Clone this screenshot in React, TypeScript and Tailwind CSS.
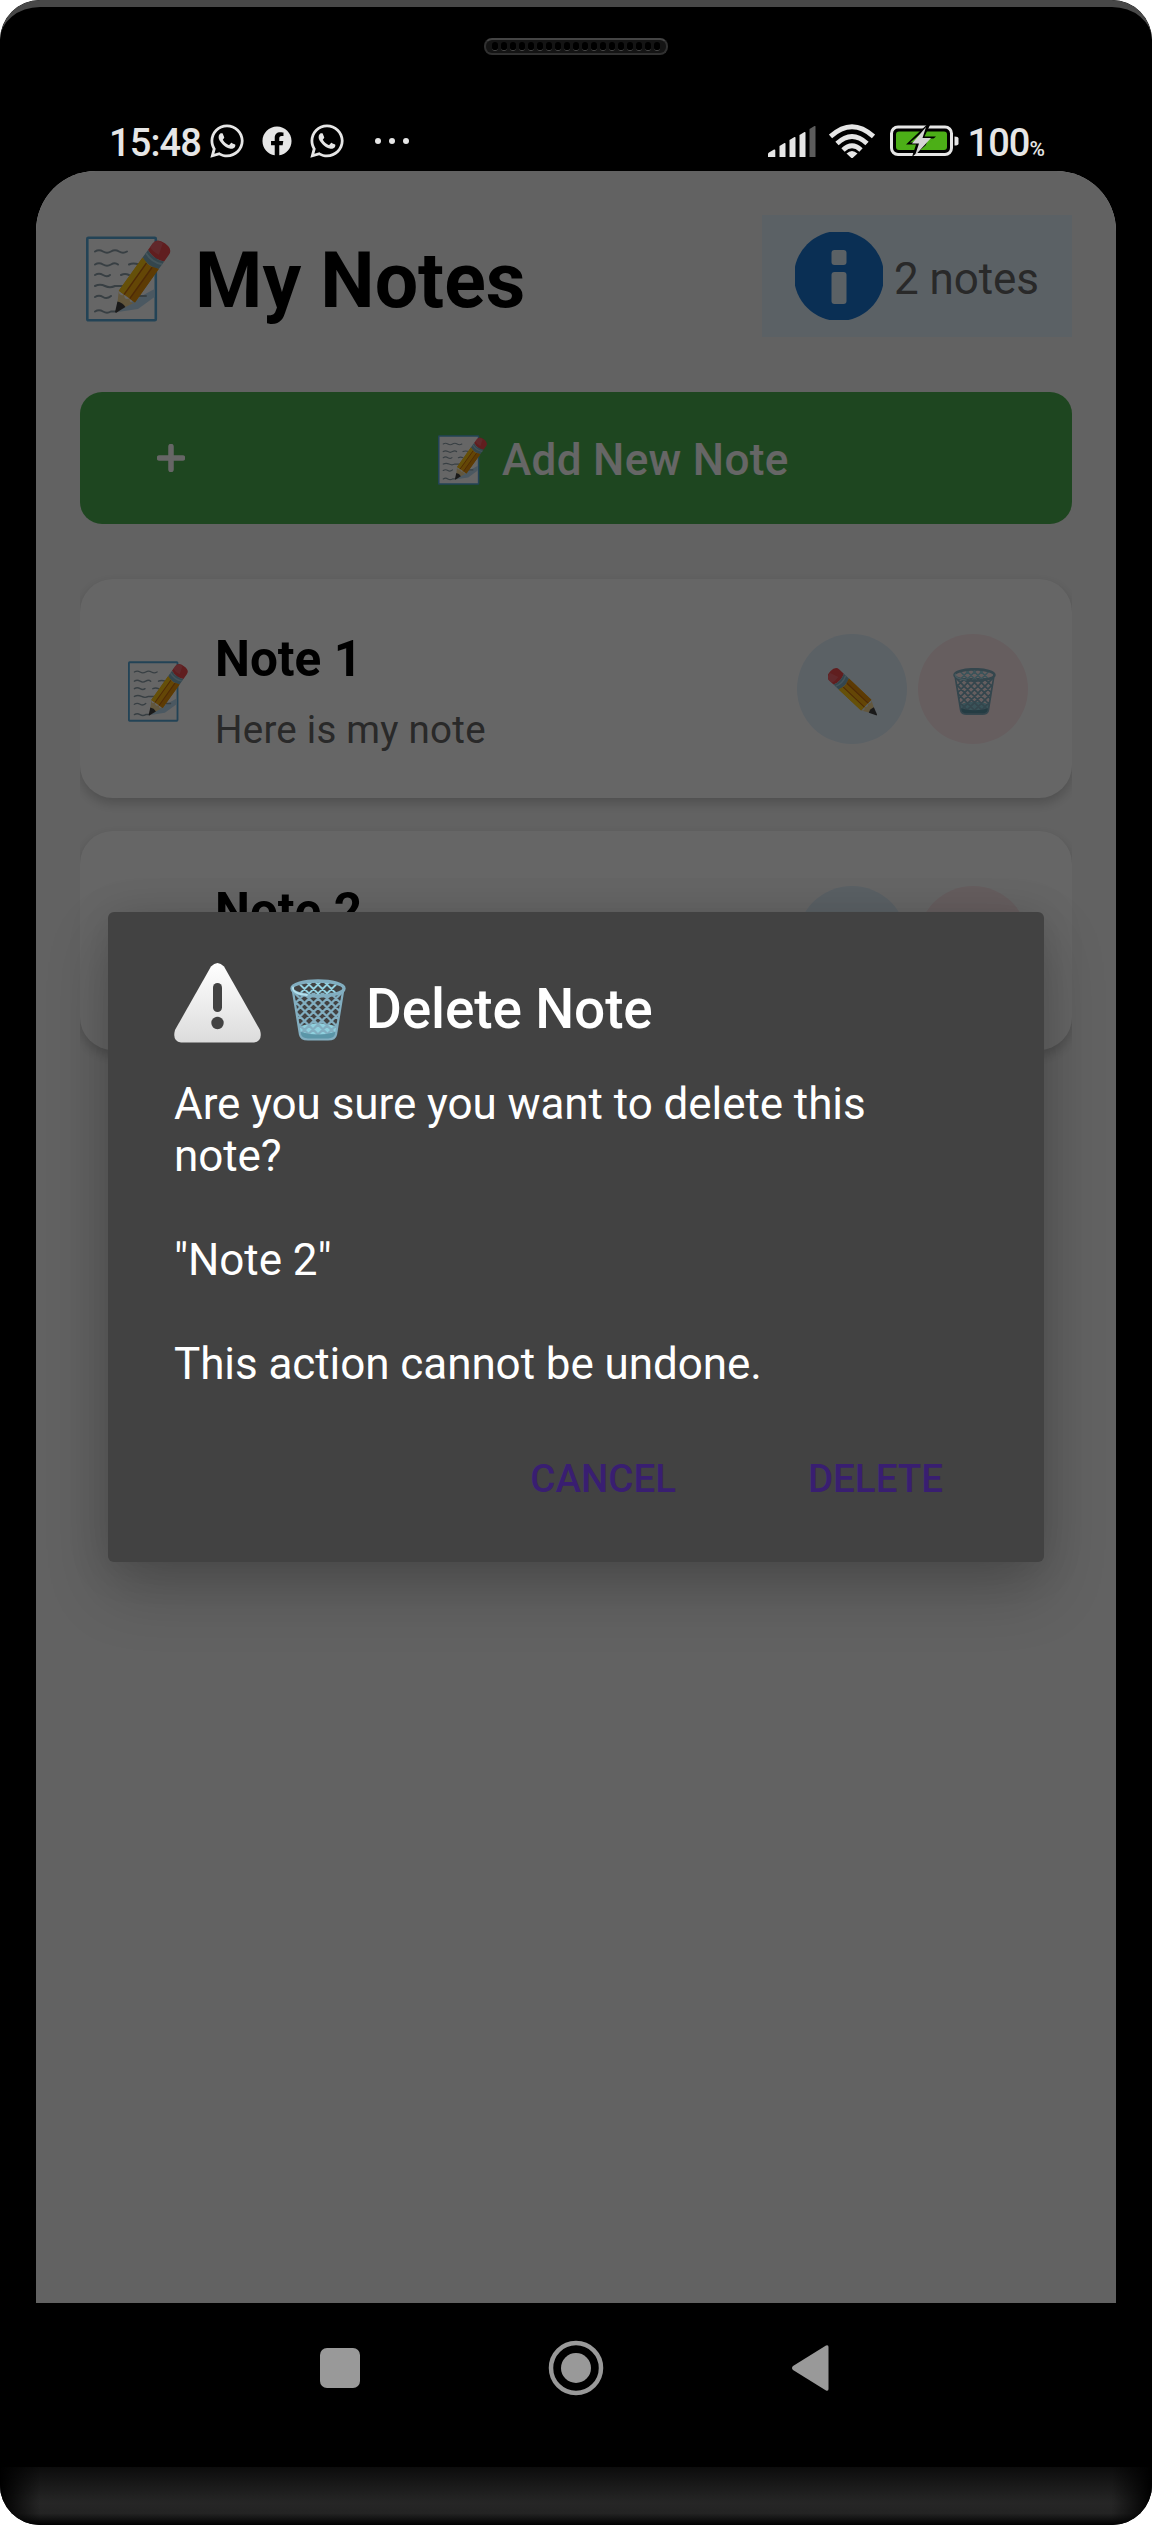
import { FaWhatsapp, FaFacebook } from "react-icons/fa";

function Pencil() {
  return (
    <g>
      <path d="M-8.5 -42 q0 -6 8.5 -6 t8.5 6 v7 q-8.5 4 -17 0z" fill="#ef4b4f" />
      <path d="M-8.5 -41 q0 -6 7 -6 l3 10 q-6 1 -10 -1z" fill="#f78088" opacity=".5" />
      <path d="M-8.5 -35 q8.5 4 17 0 v8 q-8.5 4 -17 0z" fill="#82aec0" />
      <path d="M-8.5 -32 q8.5 4 17 0" fill="none" stroke="#a9d3e2" strokeWidth="1.6" />
      <path d="M-8.5 -27 q8.5 4 17 0 V8 h-17z" fill="#f9b010" />
      <path d="M-8.5 -27 l5.5 1.6 V8 h-5.5z" fill="#fdc717" />
      <path d="M3 -25.5 l5.5 -1.5 V8 H3z" fill="#e8930c" />
      <path d="M-3 -25 V8 M3 -25 V8" stroke="#c56a10" strokeWidth="1.3" />
      <path d="M-8.5 8 q3 4 5.7 0 q2.8 4 5.6 0 q3 4 5.7 0 L1.8 20 h-3.6z" fill="#f6d999" />
      <path d="M-4.2 16 q4.2 -2 8.4 0 L.8 24 q-.8 1.5 -1.6 0z" fill="#424242" />
    </g>
  );
}

function Memo({ className }: { className: string }) {
  return (
    <svg viewBox="0 0 86 86" className={className}>
      <rect x="1.3" y="1.8" width="68.500" height="82.500" rx="1" fill="#fff" stroke="#57a9d8" strokeWidth="2.600" />
      <path d="M68.500 53 V61 L52 73 L32 76 L48 64z" fill="#bcdcf2" />
      <g fill="none" stroke="#8c9ea8" strokeWidth="2" strokeLinecap="round">
        <path d="M9 15.500 q4 -2.500 8 0 t8 0 t8 0 t8 0" />
        <path d="M9 28.500 q4 -2.500 8 0 t8 0 t7 0 M43 28.500 q4 -2 10 0" />
        <path d="M9 39 q4 -2.500 8 0 t7 0 M35 39 q4 -2 8 0" />
        <path d="M9 50 q5 -2.500 10 0 t10 0 h8" />
        <path d="M9 61 q4 -2.500 8 0 t8 -1 M53 60 h7" />
        <path d="M9 75.500 q4 -2.500 8 0 t8 0 h5" />
      </g>
      <g transform="translate(46.300 53) rotate(35.500) scale(1.170)">
        <Pencil />
      </g>
    </svg>
  );
}

function EditPencil({ className }: { className: string }) {
  return (
    <svg viewBox="0 0 50 48" className={className}>
      <g transform="translate(33.100 32.300) rotate(-46.700) scale(.88)">
        <Pencil />
      </g>
    </svg>
  );
}

const LATTICE =
  "M3 12 L48 57 M12 12 L52 52 M21 12 L50 41 M30 12 L52 34 M39 12 L52 25 M4 21 L42 59 M6 33 L32 59 M7 43 L22 58 M53 12 L8 57 M44 12 L4 52 M35 12 L6 41 M26 12 L4 34 M17 12 L4 25 M52 21 L14 59 M50 33 L24 59 M49 43 L34 58";

function Trash({ className, id }: { className: string; id: string }) {
  return (
    <svg viewBox="0 0 56 61" className={className}>
      <clipPath id={id}>
        <path d="M3 13 H53 L46 56 Q45 60 38 60 H18 Q11 60 10 56z" />
      </clipPath>
      <clipPath id={id + "r"}>
        <ellipse cx="28" cy="9" rx="24" ry="6.500" />
      </clipPath>
      <g clipPath={"url(#" + id + ")"}>
        <path d="M9 47 Q28 40 47 47 V61 H9z" fill="#8fd0de" />
        <path d={LATTICE} stroke="#82aec0" strokeWidth="2.200" fill="none" />
        <path d="M9 52 Q28 58 47 52 V61 H9z" fill="#5b96a8" />
      </g>
      <path d="M3 12 L10 55 Q11 60 18 60 H38 Q45 60 46 55 L53 12" fill="none" stroke="#82aec0" strokeWidth="2.200" />
      <g clipPath={"url(#" + id + "r)"}>
        <path
          d="M3 -2 L25 20 M12 -2 L34 20 M21 -2 L43 20 M30 -2 L52 20 M53 -2 L31 20 M44 -2 L22 20 M35 -2 L13 20 M26 -2 L4 20"
          stroke="#94d1e0"
          strokeWidth="2"
          fill="none"
        />
      </g>
      <ellipse cx="28" cy="9" rx="26" ry="7.500" fill="none" stroke="#82aec0" strokeWidth="3.400" />
      <path d="M3 8 Q2 14 17 15.500" fill="none" stroke="#b3e1ed" strokeWidth="1.800" strokeLinecap="round" />
    </svg>
  );
}

function Signal() {
  return (
    <svg viewBox="0 0 48 32" className="mt-[6px] h-8 w-12" fill="#e6e6e6">
      <path d="M0 31 v-3 q0 -1 1 -1.500 l5 -3 q1.300 -.5 1.300 1 V31z" />
      <path d="M11.500 31 V20 l5 -3 q1 -.4 1 1 V31z" />
      <path d="M21.500 31 V14 l5 -3 q1 -.4 1 1 V31z" />
      <path d="M31.500 31 V9 l5 -3 q1 -.4 1 1 V31z" />
      <path d="M41.500 31 V3 l5 -3 q1 -.4 1 1 V31z" fill="#5c5c5c" />
    </svg>
  );
}

function Wifi() {
  return (
    <svg viewBox="0 0 46 34" className="mt-[4px] ml-[13px] h-[34px] w-[46px]">
      <g fill="none" stroke="#e6e6e6" strokeWidth="4.800">
        <path d="M1.500 12.500 Q23 -7 44.500 12.500" />
        <path d="M8 19.500 Q23 5.500 38 19.500" />
        <path d="M14 26 Q23 17.500 32 26" />
      </g>
      <path d="M17.500 29.500 Q23 24.500 28.500 29.500 L23.600 34 h-1.200z" fill="#e6e6e6" />
    </svg>
  );
}

function Battery() {
  return (
    <svg viewBox="0 0 70 32" className="mt-[5px] ml-[15px] h-8 w-[70px]">
      <rect x="1.500" y="2" width="60" height="27.500" rx="6.500" fill="none" stroke="#e6e6e6" strokeWidth="3" />
      <path d="M64.500 11.500 q4 0 4 2 v5 q0 2 -4 2z" fill="#e6e6e6" />
      <rect x="6" y="6.500" width="51" height="18.500" rx="3" fill="#4caf17" />
      <path d="M36.500 0 L16 19.500 H26 L22 32 L46 11.500 H34.500 L40 0z" fill="#000" />
      <path d="M31 8.500 L20 17.500 H26.500z M35 23 L44 13.500 H38z" fill="#4caf17" />
      <path d="M36 2 L22 18.500 H29 L25 30.500 L41 13 H32.500z" fill="#d5d5d5" />
    </svg>
  );
}

function StatusBar() {
  return (
    <div className="mx-9 flex h-[51px] items-start justify-between pr-[71px] pl-[73px] text-[#e6e6e6]">
      <div className="flex items-start">
        <span className="mt-px w-[99px] text-[38px] leading-[45px] font-medium tracking-[-0.9px]">15:48</span>
        <FaWhatsapp className="mt-[2px] size-[38px]" />
        <FaFacebook className="mt-[6px] ml-4 size-[30px]" />
        <FaWhatsapp className="mt-[2px] ml-4 size-[38px]" />
        <span className="mt-[18px] ml-[29px] flex gap-2">
          <i className="size-1.5 rounded-full bg-[#e6e6e6]" />
          <i className="size-1.5 rounded-full bg-[#e6e6e6]" />
          <i className="size-1.5 rounded-full bg-[#e6e6e6]" />
        </span>
      </div>
      <div className="flex items-start">
        <Signal />
        <Wifi />
        <Battery />
        <span className="mt-px ml-[7px] text-[38px] leading-[45px] font-medium tracking-[-0.9px]">100</span>
        <span className="mt-[17px] text-[21px] leading-[25px] font-medium">%</span>
      </div>
    </div>
  );
}

function NoteCard({ title, text, n }: { title: string; text: string; n: number }) {
  return (
    <div className="flex h-[219px] items-center rounded-[33px] bg-white pr-11 pl-12 shadow-[0_5px_12px_rgba(0,0,0,0.2)]">
      <Memo className="mt-[6px] size-[61px]" />
      <div className="ml-[26px] flex-1 pt-[11px]">
        <div className="h-[77px] text-[49.5px] leading-[58px] font-bold text-black">{title}</div>
        <div className="h-[51px] text-[38.5px] leading-[45px] tracking-[0.25px] text-[#666]">{text}</div>
      </div>
      <div className="flex gap-[11px]">
        <div className="flex size-[110px] items-center justify-center rounded-full bg-[#e3f2fd]">
          <EditPencil className="mt-[7px] ml-[2px] h-12 w-[50px]" />
        </div>
        <div className="flex size-[110px] items-center justify-center rounded-full bg-[#ffebee]">
          <Trash id={"bin" + n} className="mt-[6px] ml-[2px] h-[47px] w-[43px]" />
        </div>
      </div>
    </div>
  );
}

function Dialog() {
  return (
    <div className="absolute top-[741px] left-[72px] h-[650px] w-[936px] rounded-[6px] bg-[#424242] pt-[50px] pl-[66px] text-white shadow-[0_28px_64px_rgba(0,0,0,0.2),0_4px_44px_rgba(0,0,0,0.12)]">
      <div className="flex h-[82px]">
        <svg viewBox="0 0 88 82" className="h-[82px] w-[88px]">
          <defs>
            <linearGradient id="warn" x1="0" y1="0" x2="0" y2="1">
              <stop offset="0" stopColor="#fff" />
              <stop offset="1" stopColor="#dcdcdc" />
            </linearGradient>
          </defs>
          <path d="M37 4.500 Q43.500 -2.500 50 4.500 L86 68 Q89 79 80 80.500 H7 Q-2 79 1 68z" fill="url(#warn)" />
          <rect x="39" y="21" width="9" height="29" rx="4.500" fill="#424242" />
          <circle cx="43.500" cy="61" r="6.200" fill="#424242" />
        </svg>
        <Trash id="binTitle" className="mt-[17px] ml-[28px] h-[62px] w-[56px]" />
        <h2 className="mt-[14px] ml-[20px] text-[55px] leading-[66px] font-medium tracking-[-0.15px]">Delete Note</h2>
      </div>
      <p className="mt-[34px] h-[316px] w-[760px] text-[44px] leading-[52px] tracking-[-0.07px] whitespace-pre-line">
        {'Are you sure you want to delete this note?\n\n"Note 2"\n\nThis action cannot be undone.'}
      </p>
      <div className="mt-[62px] flex justify-end pr-[101px] text-[38.5px] leading-[45px] font-medium text-[#391e71]">
        <button className="mr-[132px]">CANCEL</button>
        <button>DELETE</button>
      </div>
    </div>
  );
}

function Screen() {
  return (
    <div className="relative mx-9 h-[2132px] overflow-hidden rounded-t-[60px] bg-[#f5f5f5]">
      <div className="px-11 pt-11">
        <div className="flex h-[122px] items-center">
          <Memo className="mt-[6px] ml-[6px] size-[86px]" />
          <h1 className="mt-[10px] ml-[23px] flex-1 text-[77px] leading-[90px] font-bold text-black">My Notes</h1>
          <div className="flex h-[122px] w-[310px] items-center bg-[#e3f2fd] pl-[33px]">
            <svg viewBox="0 0 88 88" className="size-[88px]">
              <circle cx="44" cy="44" r="45" fill="#1976d2" />
              <rect x="36.500" y="18" width="15" height="15" rx="3" fill="#e3f2fd" />
              <rect x="36.500" y="40" width="15" height="32" rx="3" fill="#e3f2fd" />
            </svg>
            <span className="mt-[6px] ml-[11px] text-[44px] leading-[52px] tracking-[-0.1px] text-[#666]">2 notes</span>
          </div>
        </div>
        <div className="mt-[55px] flex h-[132px] items-center rounded-[22px] bg-[#4caf50] pl-[77px] text-white">
          <svg viewBox="0 0 28 28" className="size-7">
            <path d="M14 2.500 V25.500 M2.500 14 H25.500" stroke="#fff" strokeWidth="5.500" strokeLinecap="round" />
          </svg>
          <Memo className="mt-[4px] ml-[253px] size-[50px]" />
          <span className="mt-[4px] ml-[14px] text-[44px] leading-[52px] font-medium tracking-[0.35px]">Add New Note</span>
        </div>
        <div className="mt-[55px] flex flex-col gap-[33px] overflow-x-clip pb-10">
          <NoteCard n={1} title="Note 1" text="Here is my note" />
          <NoteCard n={2} title="Note 2" text="" />
        </div>
      </div>
      <div className="absolute inset-0 bg-black/60" />
      <Dialog />
    </div>
  );
}

const HOLES = Array.from({ length: 19 }, (_, i) => i);

export default function App() {
  return (
    <div className="flex h-[2525px] w-[1152px] flex-col overflow-hidden bg-white font-[Roboto,sans-serif]">
      <div className="flex h-full flex-col overflow-hidden rounded-[40px] bg-black">
        <div className="h-[120px] rounded-t-[40px] border-t-[7px] border-[#484848] bg-black">
          <div className="mx-auto mt-[31px] flex h-[17px] w-[184px] items-center justify-center gap-[3px] rounded-lg border-2 border-[#303030] border-t-[#444] bg-[#141414]">
            {HOLES.map((i) => (
              <i key={i} className="h-[9px] w-[6px] rounded-full border-b border-[#4a4a4a] bg-black" />
            ))}
          </div>
        </div>
        <StatusBar />
        <Screen />
        <div className="flex h-[164px] items-start justify-center">
          <svg viewBox="0 0 520 60" className="mt-[35px] h-[60px] w-[520px]" fill="#999">
            <rect x="4" y="10" width="40" height="40" rx="7" />
            <circle cx="260" cy="30" r="25" fill="none" stroke="#999" strokeWidth="4.500" />
            <circle cx="260" cy="30" r="15" />
            <path d="M477 28 L510 7.500 q2.500 -1 2.500 1.500 V51 q0 2.500 -2.500 1.500 L477 32 q-2 -2 0 -4z" />
          </svg>
        </div>
        <div className="h-[58px] bg-[linear-gradient(to_right,#000,transparent_3.5%,transparent_96.5%,#000),linear-gradient(to_bottom,#0c0c0c,#262626_62%,#232323_80%,#000)]" />
      </div>
    </div>
  );
}
